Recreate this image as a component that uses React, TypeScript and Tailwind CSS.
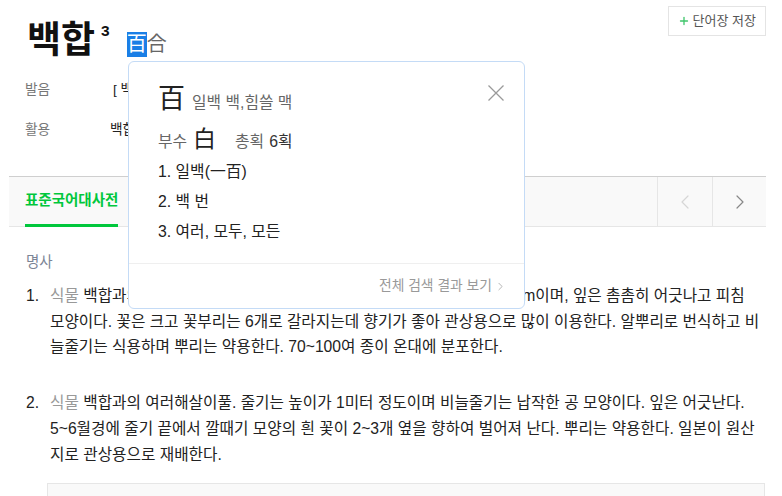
import { ChevronLeft, ChevronRight, Plus } from 'lucide-react'

const font = "font-['Liberation_Sans','Noto_Sans_CJK_KR',sans-serif]"

const senses = [
  {
    no: '1.',
    hidden: '백합과의 여러해살이풀. 줄기는 곧게 서며 높이는 30~100c',
    lines: [
      'm이며, 잎은 촘촘히 어긋나고 피침',
      '모양이다. 꽃은 크고 꽃부리는 6개로 갈라지는데 향기가 좋아 관상용으로 많이 이용한다. 알뿌리로 번식하고 비',
      '늘줄기는 식용하며 뿌리는 약용한다. 70~100여 종이 온대에 분포한다.',
    ],
  },
  {
    no: '2.',
    hidden: '',
    lines: [
      '백합과의 여러해살이풀. 줄기는 높이가 1미터 정도이며 비늘줄기는 납작한 공 모양이다. 잎은 어긋난다.',
      '5~6월경에 줄기 끝에서 깔때기 모양의 흰 꽃이 2~3개 옆을 향하여 벌어져 난다. 뿌리는 약용한다. 일본이 원산',
      '지로 관상용으로 재배한다.',
    ],
  },
]

function HanjaPopup() {
  return (
    <div className="absolute left-[128px] top-[61px] w-[397px] h-[248px] bg-white border border-[#c4dbf6] rounded-[6px]">
      <div className="px-[29px] pt-[22px]">
        <div className="flex items-start justify-between">
          <div className="flex items-baseline gap-[7px]">
            <span className="text-[27px] leading-[30px] text-[#222]">百</span>
            <span className="text-[15.8px] text-[#666]">일백 백,힘쓸 맥</span>
          </div>
          <svg width="16" height="16" viewBox="0 0 16 16" className="mt-[1px] -mr-[9px]">
            <path d="M0.5 0.5 L15.5 15.5 M15.5 0.5 L0.5 15.5" stroke="#9a9a9a" strokeWidth="1.3" fill="none" />
          </svg>
        </div>
        <div className="flex items-baseline mt-[12px] text-[15.8px]">
          <span className="text-[#666]">부수</span>
          <span className="text-[23px] leading-[24px] text-[#222] ml-[6px]">白</span>
          <span className="text-[#666] ml-[19px]">총획</span>
          <span className="text-[#333] ml-[5px]">6획</span>
        </div>
        <ul className="mt-[4px] text-[15.8px] text-[#222] leading-[30px]">
          <li>1. 일백(一百)</li>
          <li>2. 백 번</li>
          <li>3. 여러, 모두, 모든</li>
        </ul>
      </div>
      <div className="mt-[16px] border-t border-[#efefef] flex justify-end items-center pr-[17px] pt-[12px]">
        <span className="text-[13.8px] text-[#999] flex items-center gap-[2px]">
          전체 검색 결과 보기
          <ChevronRight className="w-[13px] h-[13px]" strokeWidth={1.3} />
        </span>
      </div>
    </div>
  )
}

export default function App() {
  return (
    <div className={`relative w-[782px] h-[496px] overflow-hidden bg-white ${font}`}>
      <header className="flex justify-between items-start pl-[27px] pr-[16px]">
        <div className="flex items-start pt-[19px]">
          <h1 className="text-[37px] leading-[44px] font-bold text-[#111]">백합</h1>
          <sup className="text-[15.5px] font-bold text-[#111] ml-[6px] mt-[12px] top-0">3</sup>
          <span className="ml-[17px] mt-[13px] text-[20px] leading-[25px] text-[#666] flex">
            <span className="bg-[#1a7fe6] text-white">百</span>
            <span>合</span>
          </span>
        </div>
        <button className="mt-[6px] h-[30px] px-[9px] border border-[#e4e4e4] bg-white flex items-center gap-[3px] text-[13px] text-[#555]">
          <Plus className="w-[12px] h-[12px] text-[#3fc56b]" strokeWidth={2.6} />
          단어장 저장
        </button>
      </header>

      <dl className="mt-[17px] pl-[25px] text-[13.7px] grid grid-cols-[85px_1fr] gap-y-[21px] leading-[19px]">
        <dt className="text-[#777]">발음</dt>
        <dd className="text-[#222] pl-[3px]">[ 백합 ]</dd>
        <dt className="text-[#777]">활용</dt>
        <dd className="text-[#222]">백합만[백함만]</dd>
      </dl>

      <nav className="mt-[37px] ml-[9px] w-[757px] h-[51px] bg-[#f9f9f9] border-t border-[#cfcfcf] border-b border-b-[#e6e6e6] flex">
        <div className="pl-[16px] flex-1 flex">
          <span className="relative h-full flex items-center text-[14.5px] font-bold text-[#00c73c] pb-[1px]">
            표준국어대사전
            <span className="absolute left-0 right-0 bottom-[-1px] h-[3px] bg-[#00c73c]" />
          </span>
        </div>
        <button className="w-[55px] border-l border-[#e6e6e6] flex items-center justify-center">
          <ChevronLeft className="w-[24px] h-[24px] text-[#d6d6d6]" strokeWidth={1.2} />
        </button>
        <button className="w-[54px] border-l border-[#e6e6e6] flex items-center justify-center">
          <ChevronRight className="w-[24px] h-[24px] text-[#888]" strokeWidth={1.2} />
        </button>
      </nav>

      <section className="pl-[26px] pt-[25px]">
        <p className="text-[14.5px] text-[#7c8596] leading-[20px]">명사</p>
        <ol className="mt-[11px] flex flex-col gap-[30px]">
          {senses.map((s) => (
            <li key={s.no} className="flex text-[15.7px] leading-[25.7px] text-[#222] whitespace-nowrap">
              <span className="w-[24px] shrink-0">{s.no}</span>
              <div>
                {s.lines.map((line, i) => (
                  <div key={i}>
                    {i === 0 ? <span className="text-[#999]">식물 </span> : null}
                    {i === 0 && s.hidden ? (
                      <span className="inline-block w-[439px] overflow-hidden align-top">{s.hidden}</span>
                    ) : null}
                    {line}
                  </div>
                ))}
              </div>
            </li>
          ))}
        </ol>
        <div className="mt-[16px] ml-[21px] w-[718px] h-[40px] bg-[#f9f9f9] border border-[#e6e6e6]" />
      </section>

      <HanjaPopup />
    </div>
  )
}
